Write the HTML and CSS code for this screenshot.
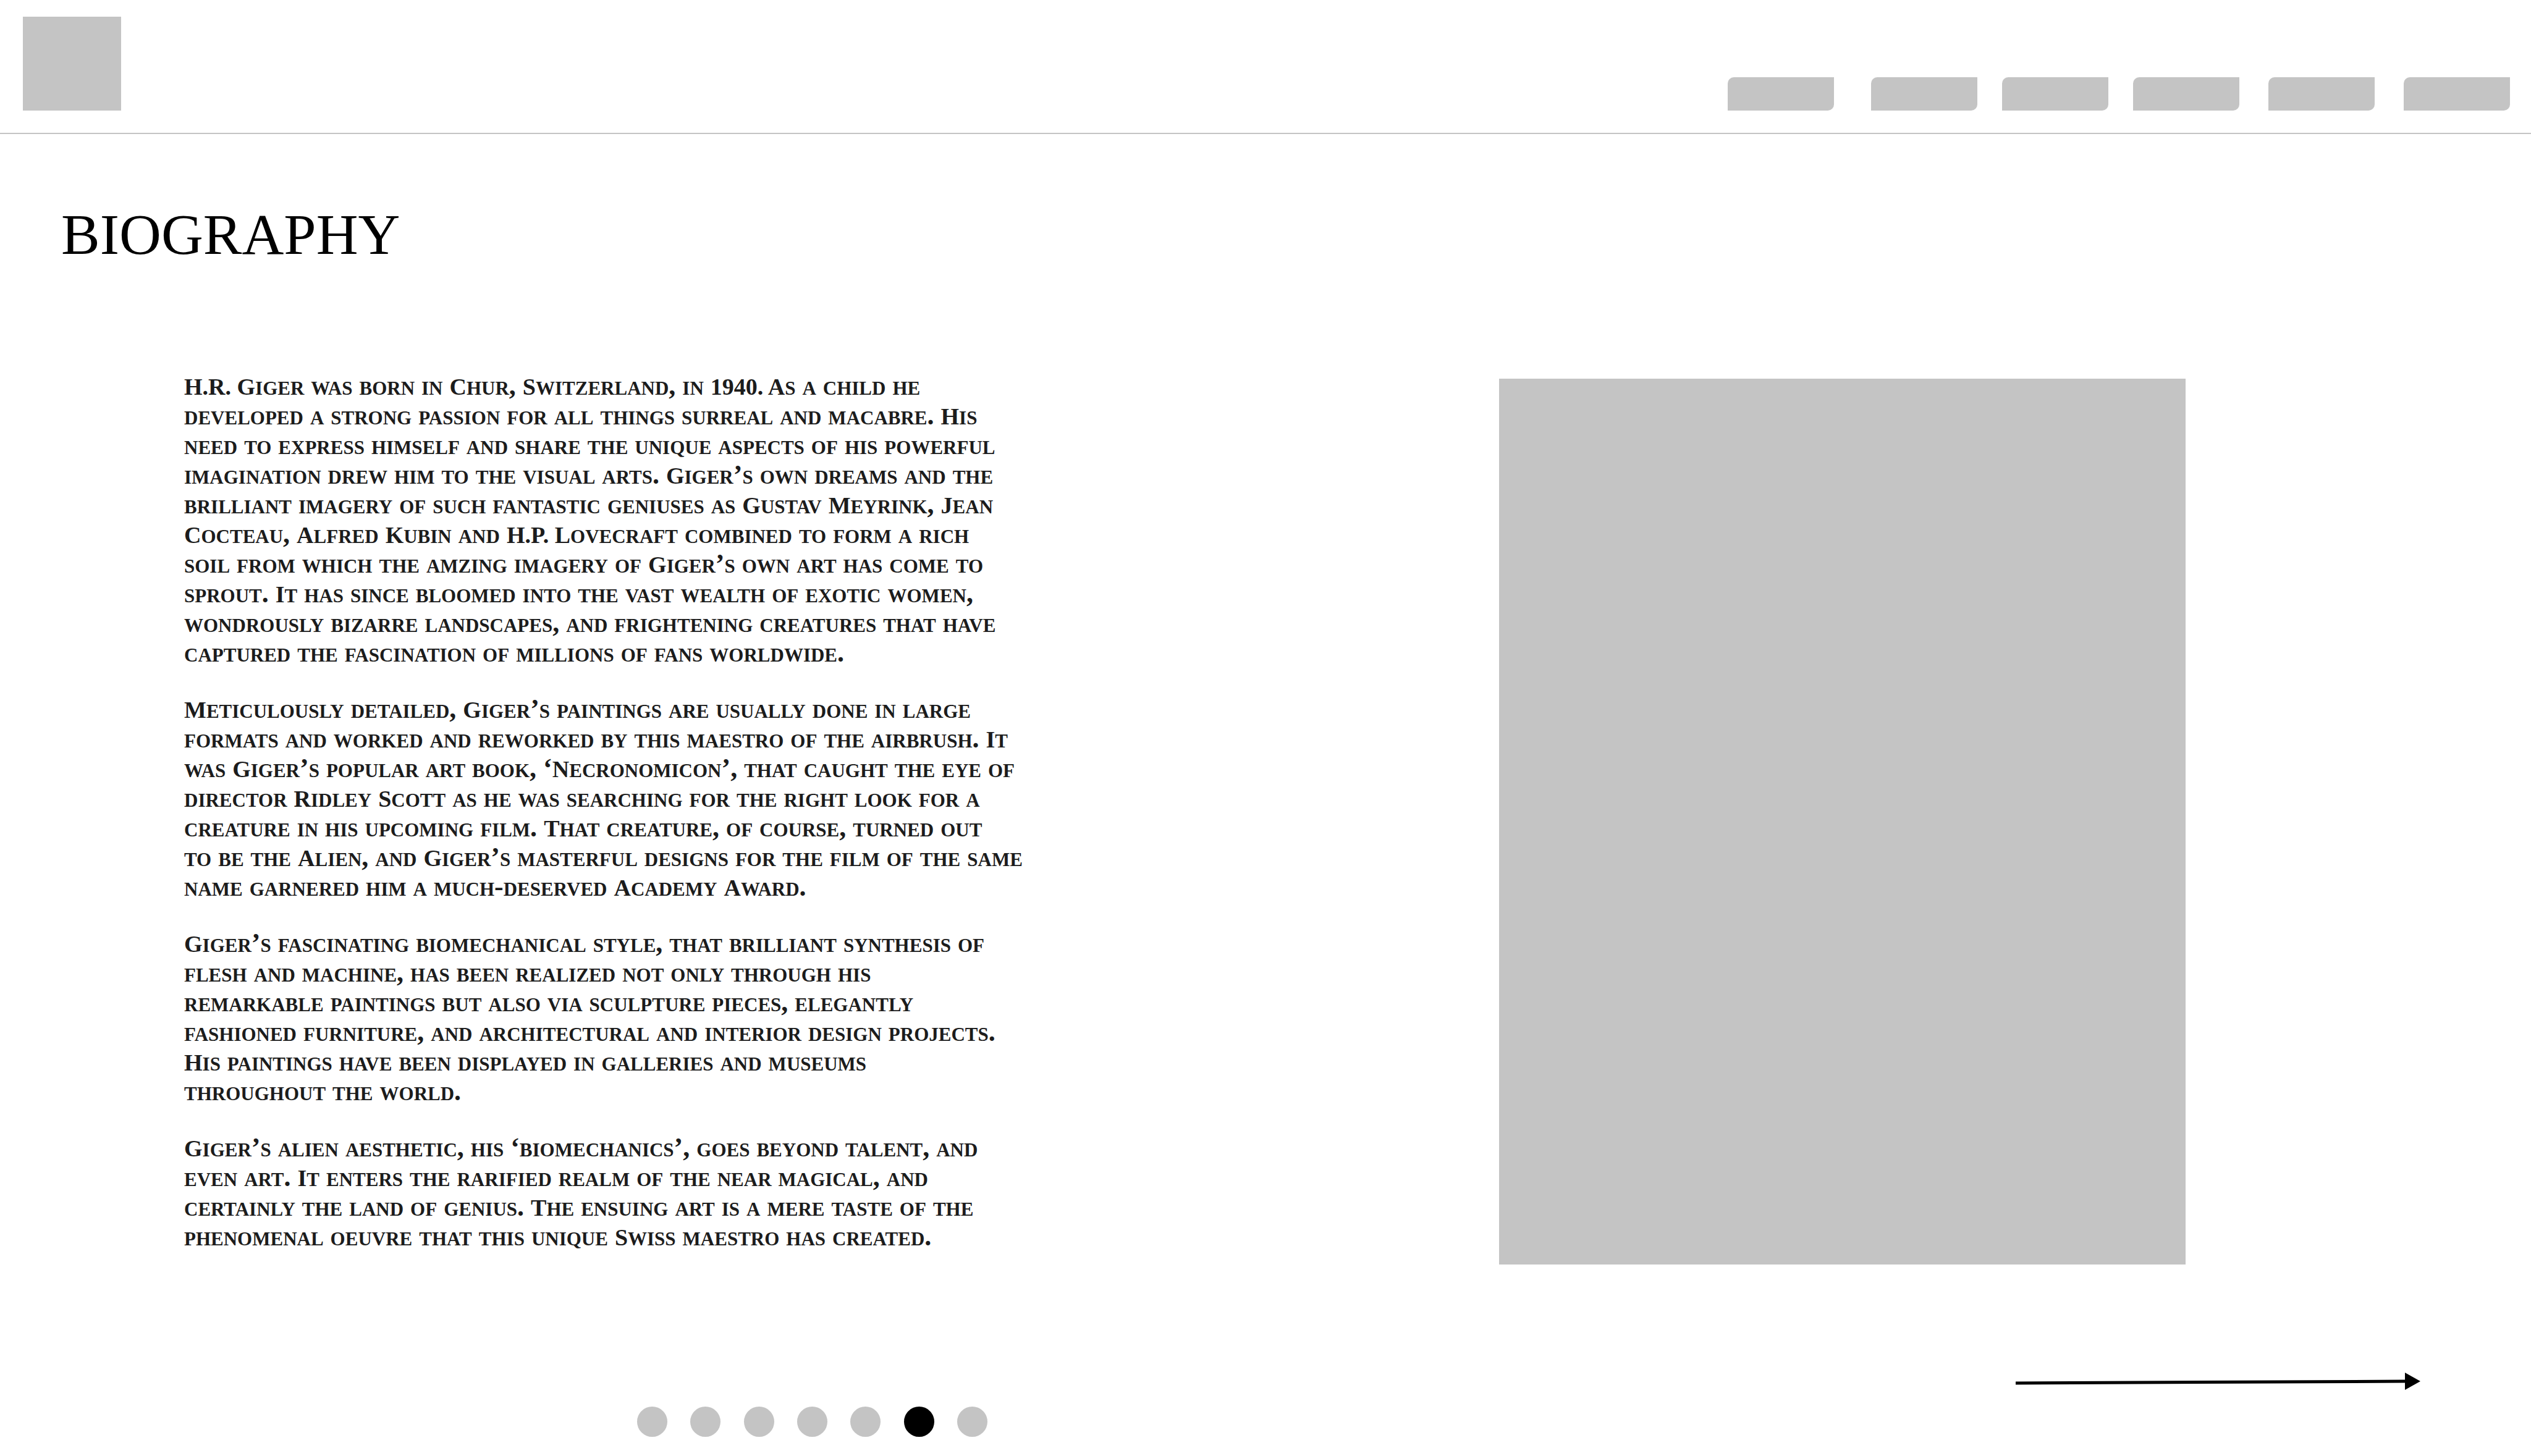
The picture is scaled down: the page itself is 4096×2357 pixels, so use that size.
FILE: index.html
```html
<!DOCTYPE html>
<html lang="en">
<head>
  <meta charset="utf-8">
  <meta name="viewport" content="width=device-width, initial-scale=1">
  <title>Biography</title>
  <link rel="stylesheet" href="styles.css">
</head>
<body>
  <header class="header">
    <a class="logo" href="#" aria-label="Home"></a>
    <nav class="nav" aria-label="Main">
      <a class="nav-item nav-item-first" href="#" aria-label="Page 1"></a>
      <a class="nav-item" href="#" aria-label="Page 2"></a>
      <a class="nav-item" href="#" aria-label="Page 3"></a>
      <a class="nav-item nav-item-wide" href="#" aria-label="Page 4"></a>
      <a class="nav-item nav-item-wide" href="#" aria-label="Page 5"></a>
      <a class="nav-item" href="#" aria-label="Page 6"></a>
    </nav>
  </header>

  <main class="main">
    <h1 class="title">BIOGRAPHY</h1>
    <div class="content">
      <article class="story">
        <p><span class="cap">H.R. G</span>iger was born in <span class="cap">C</span>hur, <span class="cap">S</span>witzerland, in <span class="cap">1940. A</span>s a child he<br>
          developed a strong passion for all things surreal and macabre. <span class="cap">H</span>is<br>
          need to express himself and share the unique aspects of his powerful<br>
          imagination drew him to the visual arts. <span class="cap">G</span>iger’s own dreams and the<br>
          brilliant imagery of such fantastic geniuses as <span class="cap">G</span>ustav <span class="cap">M</span>eyrink, <span class="cap">J</span>ean<br>
          <span class="cap">C</span>octeau, <span class="cap">A</span>lfred <span class="cap">K</span>ubin and <span class="cap">H.P. L</span>ovecraft combined to form a rich<br>
          soil from which the amzing imagery of <span class="cap">G</span>iger’s own art has come to<br>
          sprout. <span class="cap">I</span>t has since bloomed into the vast wealth of exotic women,<br>
          wondrously bizarre landscapes, and frightening creatures that have<br>
          captured the fascination of millions of fans worldwide.</p>
        <p><span class="cap">M</span>eticulously detailed, <span class="cap">G</span>iger’s paintings are usually done in large<br>
          formats and worked and reworked by this maestro of the airbrush. <span class="cap">I</span>t<br>
          was <span class="cap">G</span>iger’s popular art book, ‘<span class="cap">N</span>ecronomicon’, that caught the eye of<br>
          director <span class="cap">R</span>idley <span class="cap">S</span>cott as he was searching for the right look for a<br>
          creature in his upcoming film. <span class="cap">T</span>hat creature, of course, turned out<br>
          to be the <span class="cap">A</span>lien, and <span class="cap">G</span>iger’s masterful designs for the film of the same<br>
          name garnered him a much-deserved <span class="cap">A</span>cademy <span class="cap">A</span>ward.</p>
        <p><span class="cap">G</span>iger’s fascinating biomechanical style, that brilliant synthesis of<br>
          flesh and machine, has been realized not only through his<br>
          remarkable paintings but also via sculpture pieces, elegantly<br>
          fashioned furniture, and architectural and interior design projects.<br>
          <span class="cap">H</span>is paintings have been displayed in galleries and museums<br>
          throughout the world.</p>
        <p><span class="cap">G</span>iger’s alien aesthetic, his ‘biomechanics’, goes beyond talent, and<br>
          even art. <span class="cap">I</span>t enters the rarified realm of the near magical, and<br>
          certainly the land of genius. <span class="cap">T</span>he ensuing art is a mere taste of the<br>
          phenomenal oeuvre that this unique <span class="cap">S</span>wiss maestro has created.</p>
      </article>
      <div class="photo"></div>
    </div>
  </main>

  <footer class="footer">
    <div class="dots">
      <button class="dot" type="button" aria-label="Slide 1"></button>
      <button class="dot" type="button" aria-label="Slide 2"></button>
      <button class="dot" type="button" aria-label="Slide 3"></button>
      <button class="dot" type="button" aria-label="Slide 4"></button>
      <button class="dot" type="button" aria-label="Slide 5"></button>
      <button class="dot dot-active" type="button" aria-label="Slide 6" aria-current="true"></button>
      <button class="dot" type="button" aria-label="Slide 7"></button>
    </div>
    <a class="next" href="#" aria-label="Next">
      <svg class="arrow" viewBox="0 0 655 28" aria-hidden="true">
        <path d="M0 17 L632 14" fill="none" stroke="#000" stroke-width="5"/>
        <path d="M630 0 L655 14 L630 28 Z" fill="#000"/>
      </svg>
    </a>
  </footer>
</body>
</html>
```
FILE: styles.css
```css
* {
  box-sizing: border-box;
}

body {
  display: flex;
  flex-direction: column;
  min-height: 100vh;
  margin: 0;
  background: #fff;
  color: #1c1c1c;
  font-family: "Liberation Serif", "Times New Roman", serif;
}

.header {
  display: flex;
  align-items: flex-end;
  justify-content: space-between;
  padding: 27px 34px 36px 37px;
  border-bottom: 2px solid #c4c4c4;
}

.logo {
  width: 159px;
  height: 152px;
  background: #c4c4c4;
}

.nav {
  display: flex;
  gap: 40px;
}

.nav-item {
  width: 172px;
  height: 54px;
  border-radius: 10px 0;
  background: #c4c4c4;
}

.nav-item-first {
  margin-right: 20px;
}

.nav-item-wide {
  margin-right: 7px;
}

.title {
  margin: 0;
  padding: 114px 0 0 99px;
  color: #000;
  font-size: 94px;
  font-weight: 400;
  line-height: 96px;
}

.content {
  display: grid;
  grid-template-columns: 2128fr 1111fr;
  align-items: start;
  padding: 174px 559px 0 298px;
}

.story {
  font-size: 44px;
  font-variant: small-caps;
  font-weight: 700;
  line-height: 48px;
  white-space: nowrap;
}

.story p {
  margin: 0 0 43px;
}

.story p:last-child {
  margin-bottom: 0;
}

/* Capitals stand only a little taller than the small caps. */
.cap {
  font-size: 38px;
  line-height: 1;
}

.photo {
  margin-top: 12px;
  aspect-ratio: 1111 / 1434;
  background: #c4c4c4;
}

.footer {
  display: flex;
  justify-content: space-between;
  height: 135px;
  margin-top: auto;
  padding: 0 179px 31px 1031px;
}

.dots {
  display: flex;
  align-items: flex-end;
  justify-content: space-between;
  width: 567px;
}

.dot {
  width: 49px;
  height: 49px;
  padding: 0;
  border: 0;
  border-radius: 50%;
  background: #c4c4c4;
}

.dot-active {
  background: #000;
}

.next {
  width: 655px;
}

.arrow {
  display: block;
  width: 100%;
}
```
